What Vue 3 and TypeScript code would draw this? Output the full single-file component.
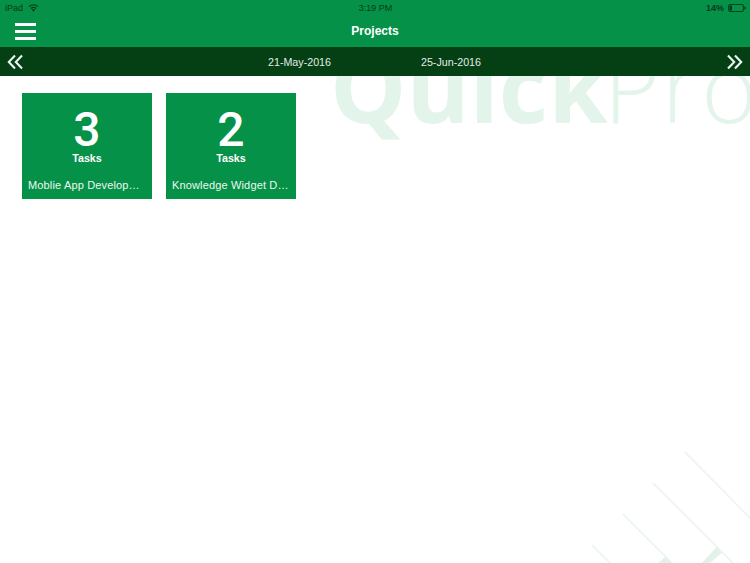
<script setup lang="ts">
interface Project {
  count: number
  name: string
}

const projects: Project[] = [
  { count: 3, name: 'Moblie App Development' },
  { count: 2, name: 'Knowledge Widget Development' },
]
</script>

<template>
  <div class="page">
    <header class="header">
      <div class="status">
        <div class="status-left">
          <span>iPad</span>
          <svg class="wifi" viewBox="0 0 12 9" width="11" height="8">
            <path d="M6 8.8 4.2 6.5a2.8 2.8 0 0 1 3.6 0Z" fill="#063a18" />
            <path d="M3 5a4.6 4.6 0 0 1 6 0M1 2.9a7.6 7.6 0 0 1 10 0" fill="none" stroke="#063a18" stroke-width="1.4" />
          </svg>
        </div>
        <span class="status-time">3:19 PM</span>
        <div class="status-right">
          <span>14%</span>
          <svg viewBox="0 0 18 8" width="18" height="8">
            <rect x="0.5" y="0.5" width="15" height="7" rx="1.5" fill="none" stroke="#063a18" stroke-width="0.9" />
            <rect x="1.5" y="1.5" width="2.4" height="5" fill="#063a18" />
            <rect x="16.2" y="2.5" width="1.2" height="3" fill="#063a18" />
          </svg>
        </div>
      </div>
      <div class="titlebar">
        <button class="menu" aria-label="Menu"><i /><i /><i /></button>
        <h1 class="title">Projects</h1>
      </div>
    </header>

    <nav class="datebar">
      <svg class="chev" viewBox="0 0 16 16" width="16" height="16">
        <path d="M8 1.5 1.8 8 8 14.5M15 1.5 8.8 8l6.2 6.5" fill="none" stroke="#eef6f0" stroke-width="2.1" />
      </svg>
      <div class="dates">
        <span>21-May-2016</span>
        <span>25-Jun-2016</span>
      </div>
      <svg class="chev" viewBox="0 0 16 16" width="16" height="16">
        <path d="M1 1.5 7.2 8 1 14.5M8 1.5 14.2 8 8 14.5" fill="none" stroke="#eef6f0" stroke-width="2.1" />
      </svg>
    </nav>

    <main class="content">
      <div class="watermark" aria-hidden="true"><b>Quick</b><span>Pro</span></div>
      <svg class="lines" viewBox="0 0 750 563" width="750" height="563" aria-hidden="true">
        <path d="M685 452 750 518M653 483 733 563M623 514 672 563M592 545 610 563" stroke="#e8f4ec" stroke-width="1.5" fill="none" />
        <path d="M716.7 547 721.7 553 710 563H701.7ZM665 557 672 563H658Z" fill="#e3f2e8" />
      </svg>
      <div class="cards">
        <article v-for="p in projects" :key="p.name" class="card">
          <div class="count">{{ p.count }}</div>
          <div class="label">Tasks</div>
          <div class="name">{{ p.name }}</div>
        </article>
      </div>
    </main>
  </div>
</template>

<style scoped>
.page {
  width: 750px;
  height: 563px;
  display: flex;
  flex-direction: column;
  overflow: hidden;
  background: #fff;
  font-family: "Liberation Sans", Arial, sans-serif;
}
.header {
  height: 47px;
  background: #059147;
  display: flex;
  flex-direction: column;
  color: #fff;
}
.status {
  height: 15px;
  padding: 0 4px 0 5px;
  display: grid;
  grid-template-columns: 1fr auto 1fr;
  align-items: center;
  font-size: 9px;
  color: #063a18;
}
.status-left {
  display: flex;
  align-items: center;
  gap: 5px;
}
.status-right {
  display: flex;
  justify-content: flex-end;
  align-items: center;
  gap: 4px;
  font-weight: bold;
}
.titlebar {
  flex: 1;
  display: flex;
  align-items: center;
  justify-content: center;
  position: relative;
}
.menu {
  position: absolute;
  left: 15px;
  top: 8px;
  width: 21px;
  height: 17px;
  padding: 0;
  border: 0;
  background: none;
  display: flex;
  flex-direction: column;
  justify-content: space-between;
}
.menu i {
  display: block;
  height: 3px;
  background: #fff;
}
.title {
  margin: 0;
  font-size: 12px;
  font-weight: bold;
  line-height: 1;
}
.datebar {
  height: 29px;
  flex: none;
  box-sizing: border-box;
  padding: 0 7px 0 7px;
  background: #053f14;
  display: flex;
  align-items: center;
  justify-content: space-between;
}
.dates {
  margin-left: 245px;
  margin-right: auto;
  display: flex;
  gap: 90px;
  font-size: 10.7px;
  color: #e3ece5;
}
.content {
  flex: 1;
  position: relative;
  overflow: hidden;
  padding: 17px 22px;
}
.watermark {
  position: absolute;
  left: 330px;
  top: -55px;
  white-space: nowrap;
  font-family: "Open Sans", sans-serif;
  font-size: 96px;
  line-height: 130px;
  color: #e3f4eb;
}
.watermark b {
  font-weight: 700;
}
.watermark span {
  font-weight: 300;
  margin-left: -4px;
  letter-spacing: 2px;
}
.lines {
  position: absolute;
  left: 0;
  top: -76px;
}
.cards {
  position: relative;
  display: flex;
  gap: 14px;
}
.card {
  width: 130px;
  height: 106px;
  box-sizing: border-box;
  padding: 12px 6px 0;
  background: #059147;
  color: #fff;
  text-align: center;
}
.count {
  font-family: Roboto, "Liberation Sans", sans-serif;
  font-size: 48px;
  line-height: 50px;
  font-weight: 500;
}
.label {
  font-size: 10.7px;
  font-weight: bold;
  line-height: 14px;
  margin-top: -4px;
}
.name {
  margin-top: 13px;
  font-size: 11px;
  letter-spacing: 0.15px;
  line-height: 14px;
  text-align: left;
  color: #eef7f1;
  white-space: nowrap;
  overflow: hidden;
  text-overflow: ellipsis;
}
</style>
